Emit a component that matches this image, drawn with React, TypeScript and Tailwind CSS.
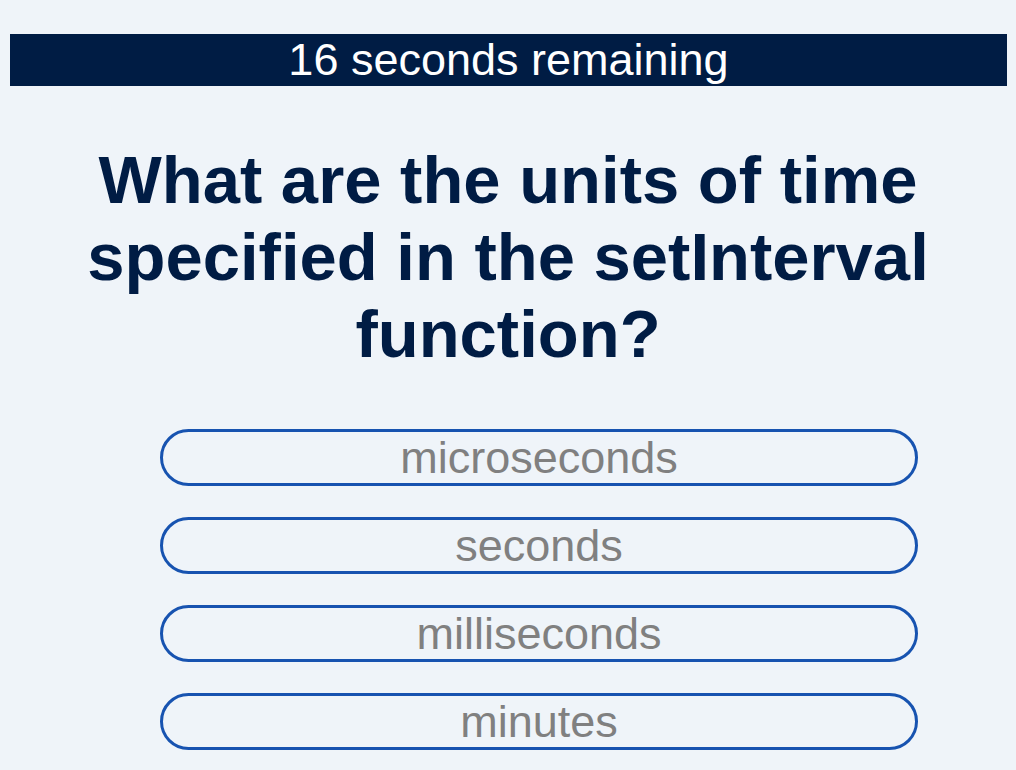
import React from "react";

const QuizQuestion = () => {
  // opciones de respuesta
  const opciones = ["microseconds", "seconds", "milliseconds", "minutes"];

  return (
    <div className="min-h-[770px] bg-[#eff4f9] pt-[34px] font-['Liberation_Sans',Arial,sans-serif]">
      <div className="mx-[10px] w-[997px] h-[52px] bg-[#001c44] text-white text-[45px] leading-[52px] text-center">
        16 seconds remaining
      </div>
      <h1 className="mt-[55px] mx-auto w-[900px] text-center text-[67px] leading-[77px] font-bold text-[#001c44]">
        What are the units of time specified in the setInterval function?
      </h1>
      <div className="mt-[57px] ml-[160px] w-[758px] flex flex-col gap-[31px]">
        {opciones.map((opcion) => (
          <button
            key={opcion}
            type="button"
            className="h-[57px] border-[3px] border-[#1753b0] rounded-full text-[45px] leading-[51px] text-[#808080] text-center"
          >
            {opcion}
          </button>
        ))}
      </div>
    </div>
  );
};

export default QuizQuestion;
